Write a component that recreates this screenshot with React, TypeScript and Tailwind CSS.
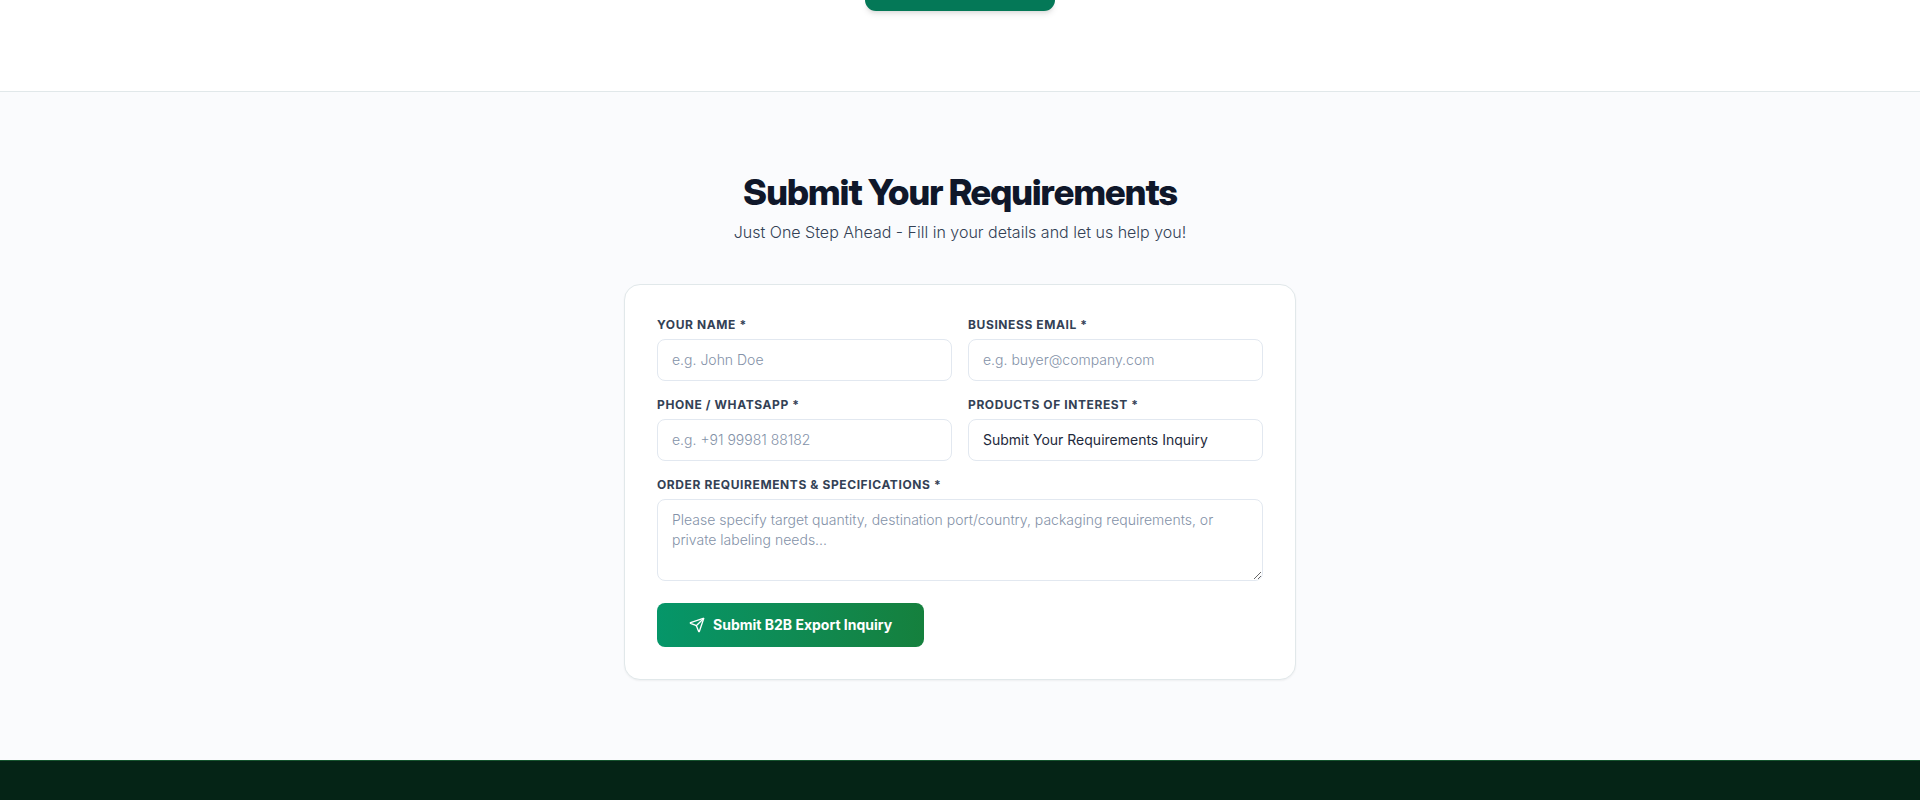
import React, { useState } from "react";
import { Send } from "lucide-react";

const labelClass = "block text-xs font-bold uppercase tracking-wider text-[#334155] mb-1.5";
const fieldClass =
  "block w-full rounded-lg border border-[#e2e8f0] bg-white px-3.5 py-2.5 text-sm text-[#1e293b] placeholder-shown:font-light placeholder:text-[#8492a8] outline-none focus:border-[#059669] transition-colors";

const fields = [
  { id: "name", type: "text", label: "Your Name *", placeholder: "e.g. John Doe" },
  { id: "email", type: "email", label: "Business Email *", placeholder: "e.g. buyer@company.com" },
  { id: "phone", type: "tel", label: "Phone / WhatsApp *", placeholder: "e.g. +91 99981 88182" },
  { id: "products", type: "text", label: "Products of Interest *", placeholder: "" },
];

function InquiryForm() {
  const [form, setForm] = useState<Record<string, string>>({
    name: "",
    email: "",
    phone: "",
    products: "Submit Your Requirements Inquiry",
    message: "",
  });

  const update = (id: string, value: string) => setForm({ ...form, [id]: value });

  return (
    <form
      onSubmit={(e) => e.preventDefault()}
      className="rounded-2xl border border-[#e1e8ea] bg-white p-8 shadow-xs"
    >
      <div className="grid grid-cols-1 sm:grid-cols-2 gap-4">
        {fields.map((field) => (
          <div key={field.id}>
            <label htmlFor={field.id} className={labelClass}>{field.label}</label>
            <input
              id={field.id}
              type={field.type}
              required
              value={form[field.id]}
              placeholder={field.placeholder}
              onChange={(e) => update(field.id, e.target.value)}
              className={fieldClass}
            />
          </div>
        ))}
      </div>

      <div className="mt-4">
        <label htmlFor="message" className={labelClass}>Order Requirements &amp; Specifications *</label>
        <textarea
          id="message"
          rows={3}
          required
          value={form.message}
          placeholder="Please specify target quantity, destination port/country, packaging requirements, or private labeling needs..."
          onChange={(e) => update("message", e.target.value)}
          className={fieldClass}
        />
      </div>

      <button
        type="submit"
        className="mt-[22px] flex items-center justify-center gap-2 rounded-lg bg-linear-to-r from-[#059669] to-[#15803d] px-8 py-3 text-sm font-bold text-white hover:opacity-95 transition-opacity"
      >
        <Send className="w-4 h-4" />
        <span>Submit B2B Export Inquiry</span>
      </button>
    </form>
  );
}

export default function App() {
  return (
    <div className="min-h-screen flex flex-col bg-white font-['Inter',sans-serif] antialiased">
      {/* Tail of the previous section */}
      <section className="flex justify-center pb-20">
        <a
          href="#inquiry"
          aria-label="Inquiry"
          className="block h-[11px] w-[190px] rounded-b-xl bg-[#047857] shadow-md"
        />
      </section>

      <section id="inquiry" className="border-t border-[#e1e8ea] bg-[#fafbfd] px-4 py-20">
        <div className="mx-auto max-w-2xl">
          <div className="mb-10 text-center">
            <h2 className="font-['Inter_Display','Inter',sans-serif] text-4xl font-extrabold tracking-tight text-[#0f172a]">Submit Your Requirements</h2>
            <p className="mt-2 text-base font-light text-[#334155]">Just One Step Ahead - Fill in your details and let us help you!</p>
          </div>
          <InquiryForm />
        </div>
      </section>

      <footer className="grow border-t border-[#14532d] bg-[#052416]" />
    </div>
  );
}
